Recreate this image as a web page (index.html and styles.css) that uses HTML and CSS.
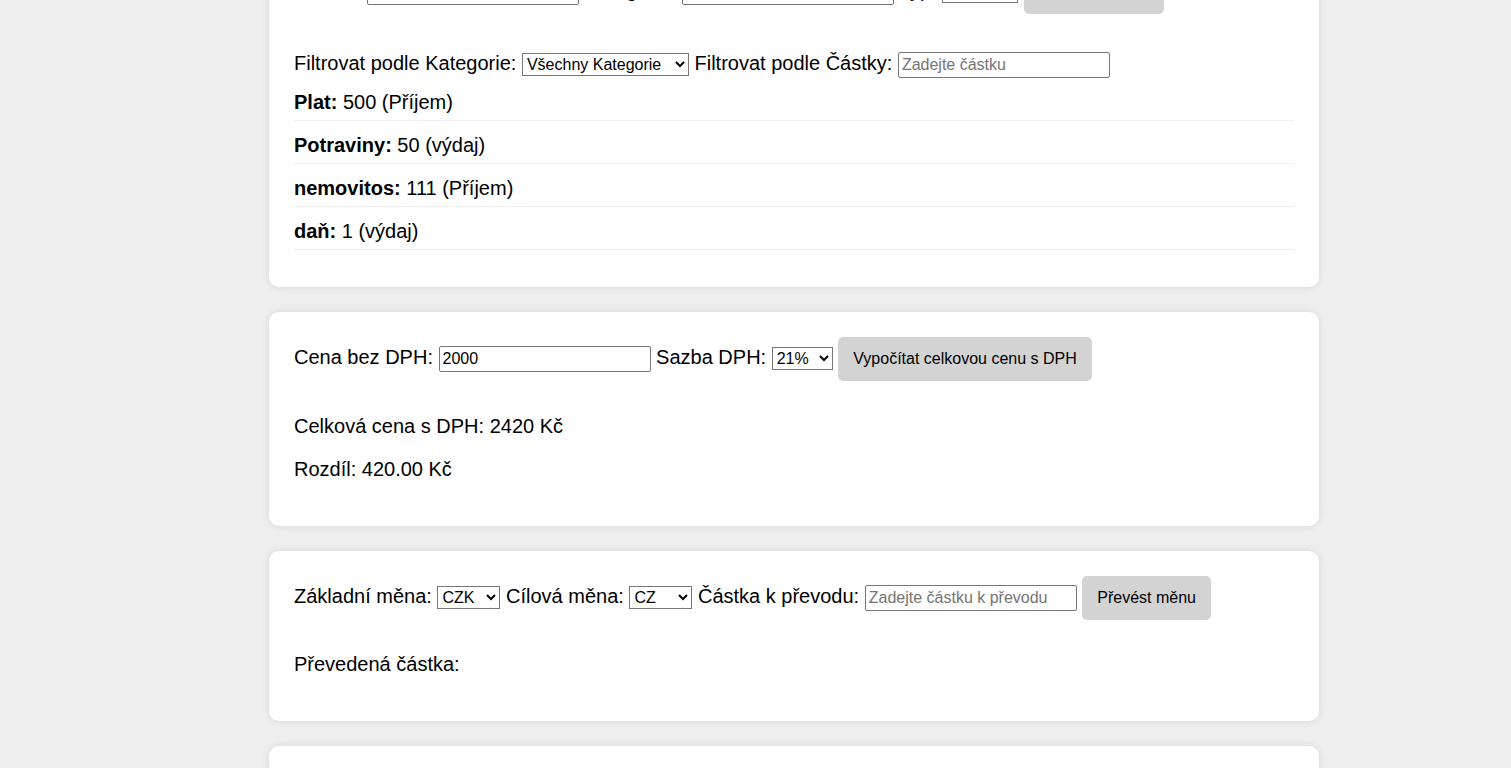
FILE: index.html
```html
<!DOCTYPE html>
<html lang="cs">
<head>
<meta charset="utf-8">
<title>Finance</title>
<link rel="stylesheet" href="styles.css">
</head>
<body>
<main class="app">
  <section class="card">
    <div class="form-row">
      <label>Částka:</label> <input class="field" type="text"> <label>Kategorie:</label> <input class="field" type="text"> <label>Typ:</label> <select class="pick pick-type"><option>Příjem</option><option>výdaj</option></select> <button class="btn">Přidat transakci</button>
    </div>
    <div class="filter-row">
      <label>Filtrovat podle Kategorie:</label> <select class="pick pick-cat"><option>Všechny Kategorie</option><option>Plat</option><option>Potraviny</option><option>nemovitos</option><option>daň</option></select> <label>Filtrovat podle Částky:</label> <input class="field" type="text" placeholder="Zadejte částku">
    </div>
    <ul class="tx-list">
      <li><strong>Plat:</strong> 500 (Příjem)</li>
      <li><strong>Potraviny:</strong> 50 (výdaj)</li>
      <li><strong>nemovitos:</strong> 111 (Příjem)</li>
      <li><strong>daň:</strong> 1 (výdaj)</li>
    </ul>
  </section>

  <section class="card">
    <div class="form-row">
      <label>Cena bez DPH:</label> <input class="field" type="text" value="2000"> <label>Sazba DPH:</label> <select class="pick pick-vat"><option>21%</option><option>15%</option><option>12%</option><option>0%</option></select> <button class="btn">Vypočítat celkovou cenu s DPH</button>
    </div>
    <p class="result">Celková cena s DPH: 2420 Kč</p>
    <p class="result">Rozdíl: 420.00 Kč</p>
  </section>

  <section class="card card-currency">
    <div class="form-row">
      <label>Základní měna:</label> <select class="pick pick-cur"><option>CZK</option><option>EUR</option><option>USD</option></select> <label>Cílová měna:</label> <select class="pick pick-cur"><option>CZ</option><option>EUR</option><option>USD</option></select> <label>Částka k převodu:</label> <input class="field" type="text" placeholder="Zadejte částku k převodu"> <button class="btn">Převést měnu</button>
    </div>
    <p class="result">Převedená částka:</p>
  </section>

  <section class="card">
    <div class="form-row">
      <label>Poznámka:</label> <input class="field" type="text">
    </div>
  </section>
</main>
</body>
</html>
```
FILE: styles.css
```css
html, body {
  margin: 0;
  padding: 0;
  background: #efefef;
  font-family: "Liberation Sans", Arial, sans-serif;
  font-size: 20px;
  color: #000;
}

.app {
  width: 1050px;
  margin: -55px 0 0 269px;
  display: flex;
  flex-direction: column;
  gap: 25px;
  padding-bottom: 40px;
}

.card {
  background: #fff;
  border-radius: 10px;
  padding: 25px;
  box-shadow: 0 0 10px rgba(0, 0, 0, 0.1);
}

.form-row {
  margin-bottom: 34px;
}

.card-currency .form-row {
  margin-bottom: 33px;
}

.filter-row {
  margin-top: 38px;
}

.field {
  width: 212px;
  height: 26px;
  box-sizing: border-box;
  border: 1px solid #767676;
  border-radius: 2px;
  padding: 2px 3px;
  font-family: "Liberation Sans", Arial, sans-serif;
  font-size: 16px;
  color: #000;
  background: #fff;
}

.field::placeholder {
  color: #757575;
}

.pick {
  height: 23px;
  box-sizing: border-box;
  font-family: "Liberation Sans", Arial, sans-serif;
  font-size: 16px;
  color: #000;
  background: #fff;
  border: 1px solid #767676;
}

.pick-type { width: 76px; }
.pick-cat { width: 167px; }
.pick-vat { width: 61px; }
.pick-cur { width: 63px; }

.btn {
  font-family: "Liberation Sans", Arial, sans-serif;
  font-size: 16px;
  line-height: 20px;
  padding: 12px 15px;
  border: none;
  border-radius: 5px;
  background: #d3d3d3;
  color: #000;
}

.result {
  margin: 20px 0;
}

.tx-list {
  list-style: none;
  margin: 0 0 12px;
  padding: 0;
}

.tx-list li {
  padding: 13px 0 6px;
  border-bottom: 1px solid #eee;
}
```
